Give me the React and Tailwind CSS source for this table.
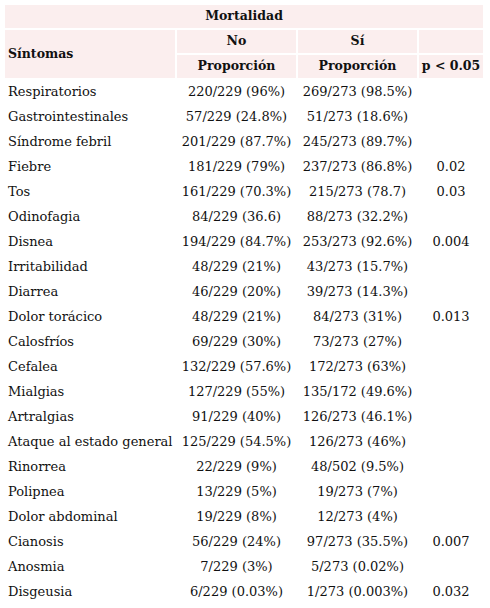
import React from 'react';

const rows = [
    ['Respiratorios', '220/229 (96%)', '269/273 (98.5%)', ''],
    ['Gastrointestinales', '57/229 (24.8%)', '51/273 (18.6%)', ''],
    ['Síndrome febril', '201/229 (87.7%)', '245/273 (89.7%)', ''],
    ['Fiebre', '181/229 (79%)', '237/273 (86.8%)', '0.02'],
    ['Tos', '161/229 (70.3%)', '215/273 (78.7)', '0.03'],
    ['Odinofagia', '84/229 (36.6)', '88/273 (32.2%)', ''],
    ['Disnea', '194/229 (84.7%)', '253/273 (92.6%)', '0.004'],
    ['Irritabilidad', '48/229 (21%)', '43/273 (15.7%)', ''],
    ['Diarrea', '46/229 (20%)', '39/273 (14.3%)', ''],
    ['Dolor torácico', '48/229 (21%)', '84/273 (31%)', '0.013'],
    ['Calosfríos', '69/229 (30%)', '73/273 (27%)', ''],
    ['Cefalea', '132/229 (57.6%)', '172/273 (63%)', ''],
    ['Mialgias', '127/229 (55%)', '135/172 (49.6%)', ''],
    ['Artralgias', '91/229 (40%)', '126/273 (46.1%)', ''],
    ['Ataque al estado general', '125/229 (54.5%)', '126/273 (46%)', ''],
    ['Rinorrea', '22/229 (9%)', '48/502 (9.5%)', ''],
    ['Polipnea', '13/229 (5%)', '19/273 (7%)', ''],
    ['Dolor abdominal', '19/229 (8%)', '12/273 (4%)', ''],
    ['Cianosis', '56/229 (24%)', '97/273 (35.5%)', '0.007'],
    ['Anosmia', '7/229 (3%)', '5/273 (0.02%)', ''],
    ['Disgeusia', '6/229 (0.03%)', '1/273 (0.003%)', '0.032'],
];

export default function App() {
    return (
        <div className="w-[490px] h-[608px] bg-white pl-[3px] pt-[3px] font-['DejaVu_Serif',serif] text-[13px] text-[#111]">
            <table className="w-[482px] table-fixed border-separate border-spacing-[2px]">
                <colgroup>
                    <col className="w-[170px]" />
                    <col className="w-[119px]" />
                    <col className="w-[119px]" />
                    <col className="w-[64px]" />
                </colgroup>
                <thead className="font-bold text-[12.5px]">
                    <tr className="h-[23px]">
                        <th colSpan="4" className="bg-[#fbeeee] text-center p-0">Mortalidad</th>
                    </tr>
                    <tr className="h-[23px]">
                        <th rowSpan="2" className="bg-[#fbeeee] text-left px-[3px] py-0">Síntomas</th>
                        <th className="bg-[#fbeeee] text-center p-0">No</th>
                        <th className="bg-[#fbeeee] text-center p-0">Sí</th>
                        <th className="bg-[#fbeeee] p-0"></th>
                    </tr>
                    <tr className="h-[23px]">
                        <th className="bg-[#fbeeee] text-center p-0">Proporción</th>
                        <th className="bg-[#fbeeee] text-center p-0">Proporción</th>
                        <th className="bg-[#fbeeee] text-center p-0 whitespace-nowrap">p &lt; 0.05</th>
                    </tr>
                </thead>
                <tbody>
                    {rows.map((r) => (
                        <tr key={r[0]} className="h-[23px]">
                            <td className="text-left px-[3px] py-0 whitespace-nowrap">{r[0]}</td>
                            <td className="text-center p-0 whitespace-nowrap">{r[1]}</td>
                            <td className="text-center p-0 whitespace-nowrap">{r[2]}</td>
                            <td className="text-center p-0">{r[3]}</td>
                        </tr>
                    ))}
                </tbody>
            </table>
        </div>
    );
}
